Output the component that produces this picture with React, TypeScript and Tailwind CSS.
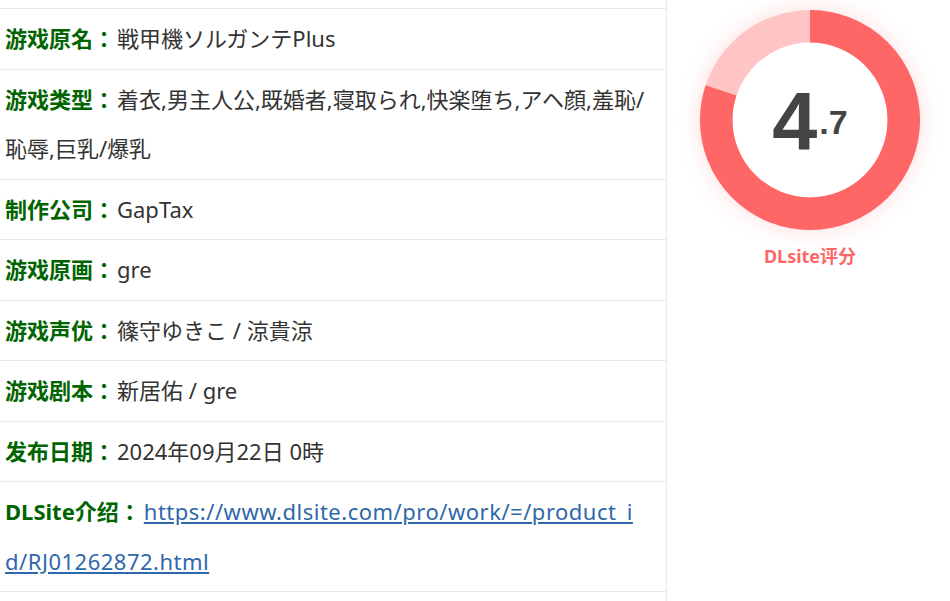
import React from 'react'

interface InfoRow {
  label: string
  value: string
  href?: string
}

const rows: InfoRow[] = [
  { label: '游戏原名：', value: '戦甲機ソルガンテPlus' },
  { label: '游戏类型：', value: '着衣,男主人公,既婚者,寝取られ,快楽堕ち,アヘ顔,羞恥/恥辱,巨乳/爆乳' },
  { label: '制作公司：', value: 'GapTax' },
  { label: '游戏原画：', value: 'gre' },
  { label: '游戏声优：', value: '篠守ゆきこ / 涼貴涼' },
  { label: '游戏剧本：', value: '新居佑 / gre' },
  { label: '发布日期：', value: '2024年09月22日 0時' },
  {
    label: 'DLSite介绍：',
    value: 'https://www.dlsite.com/pro/work/=/product_id/RJ01262872.html',
    href: 'https://www.dlsite.com/pro/work/=/product_id/RJ01262872.html',
  },
]

const FONT = '[font-family:"Noto_Sans","Noto_Sans_CJK_JP","Noto_Sans_CJK_SC",sans-serif]'

function ScoreRing({ score, fraction }: { score: string; fraction: number }) {
  const r = 93.75
  const c = 2 * Math.PI * r
  const [whole, dec] = score.split('.')
  return (
    <div className="relative w-[220px] h-[220px] rounded-full shadow-[0_0_22px_rgba(255,102,102,0.22)]">
      <svg width="220" height="220" viewBox="0 0 220 220" className="block">
        <circle cx="110" cy="110" r={r} fill="none" stroke="#ffc4c4" strokeWidth="32.5" />
        <circle
          cx="110"
          cy="110"
          r={r}
          fill="none"
          stroke="#ff6666"
          strokeWidth="32.5"
          strokeDasharray={`${c * fraction} ${c}`}
          transform="rotate(-90 110 110)"
        />
      </svg>
      <div className="absolute inset-0 flex items-center justify-center pt-[2px] text-[#444] font-bold [font-family:'Liberation_Sans',Arial,sans-serif]">
        <span className="text-[81px] leading-none">{whole}</span>
        <span className="text-[34px] leading-none mt-[1px] ml-[2px]">.{dec}</span>
      </div>
    </div>
  )
}

export default function App() {
  return (
    <div className={`flex w-[950px] h-[601px] overflow-hidden bg-white ${FONT}`}>
      {/* Info table */}
      <div className="w-[667px] border-r border-[#e1ecf4] shrink-0">
        <div className="h-[9px] border-b border-[#e1ecf4]" />
        {rows.map(row => (
          <div
            key={row.label}
            className="border-b border-[#e1ecf4] pl-[5px] pr-[17px] py-[5px] text-[22px] leading-[49.5px] text-[#333]"
          >
            <span className="font-bold text-[#006400]">{row.label}</span>
            {row.href ? (
              <a href={row.href} className="ml-[3px] text-[#2f68aa] underline break-all tracking-[0.5px]">
                {row.value}
              </a>
            ) : (
              <span className="ml-[2px]">{row.value}</span>
            )}
          </div>
        ))}
      </div>

      {/* Score */}
      <div className="flex-1 flex flex-col items-center pt-[10px] pl-[3px]">
        <ScoreRing score="4.7" fraction={0.8} />
        <p className="mt-[13px] text-[18px] leading-[26px] font-bold text-[#ff6666] [font-family:'Noto_Sans','Noto_Sans_CJK_SC',sans-serif]">
          DLsite评分
        </p>
      </div>
    </div>
  )
}
